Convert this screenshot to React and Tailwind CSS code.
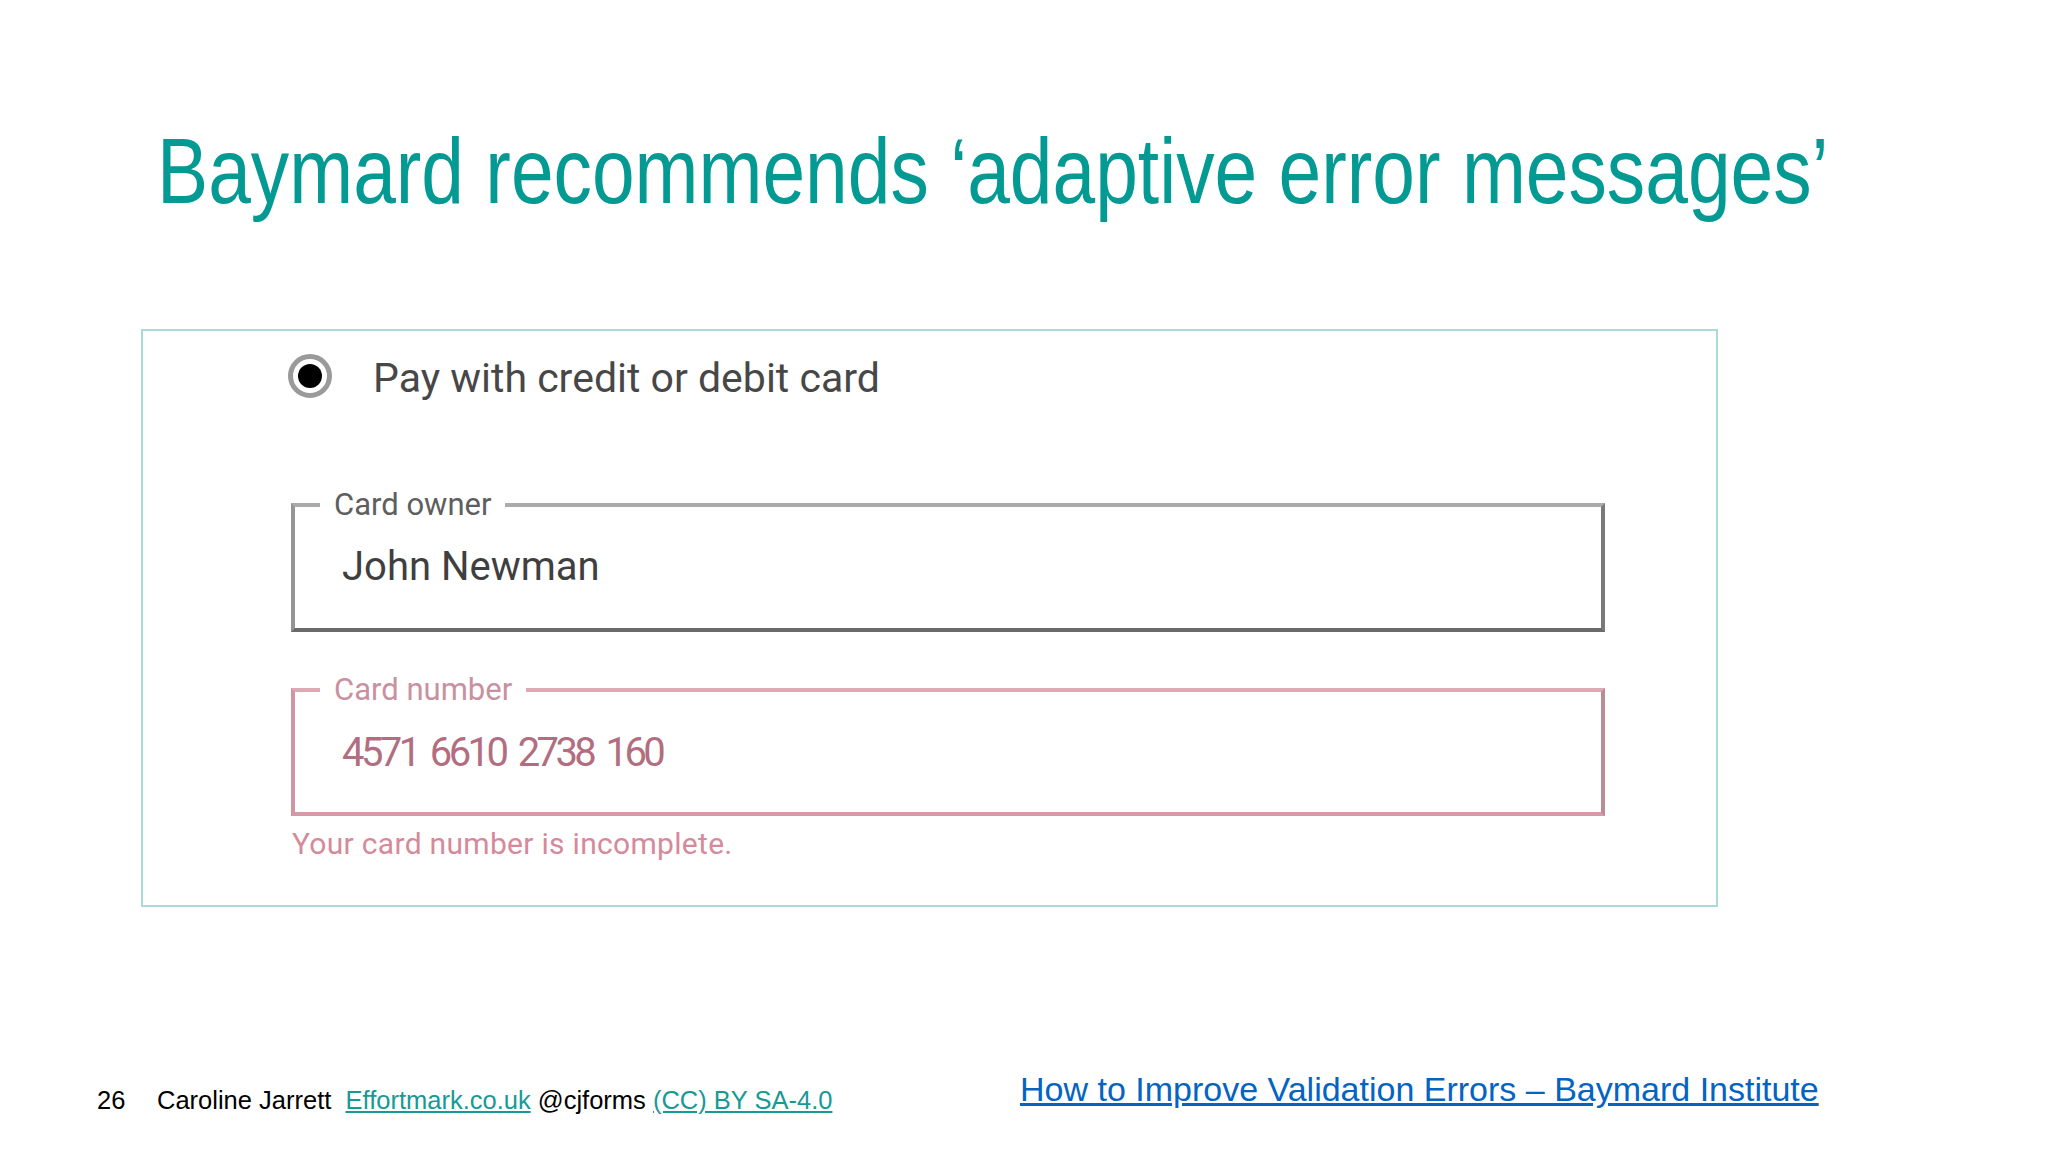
import React from 'react';

const Field = ({ label, value, error = false }) => {
  const frame = error
    ? 'border-t-[#dcaab5] border-l-[#cf96a4] border-r-[#b98c96] border-b-[#d49aa8]'
    : 'border-t-[#ababab] border-l-[#959595] border-r-[#7a7a7a] border-b-[#6a6a6a]';

  return (
    <fieldset className={`w-[1314px] border-[4px] px-[25px] ${frame}`}>
      <legend
        className={`px-[14px] text-[31px] leading-[36px] ${error ? 'text-[#c9919f]' : 'text-[#5e5e5e]'}`}
      >
        {label}
      </legend>
      <div
        className={`pl-[22px] text-[40px] leading-[46px] ${
          error
            ? 'h-[104px] pt-[22px] tracking-[-3.6px] [word-spacing:6px] text-[#b26e80]'
            : 'h-[105px] pt-[21px] text-[#3f3f3f]'
        }`}
      >
        {value}
      </div>
    </fieldset>
  );
};

export default function App() {
  return (
    <div className="w-[2048px] h-[1152px] bg-white flex flex-col overflow-hidden font-['Liberation_Sans',Arial,sans-serif]">
      <div className="ml-[157px] mt-[125px] h-[92px]">
        {/* slide title is set in a narrow face; Liberation Sans squeezed to Arial Narrow width */}
        <h1 className="inline-block origin-left scale-x-[0.834] text-[92px] leading-none text-[#049a94] font-['Liberation_Sans',Arial,sans-serif] whitespace-nowrap">
          Baymard recommends ‘adaptive error messages’
        </h1>
      </div>

      {/* screenshot of the Baymard form example */}
      <div className="ml-[141px] mt-[112px] w-[1577px] h-[578px] border-2 border-[#a9dcd9] flex flex-col font-['Roboto','Liberation_Sans',sans-serif]">
        <div className="flex items-center pt-[21px] pl-[145px]">
          <div className="w-[44px] h-[44px] rounded-full border-[5px] border-[#9a9a9a] flex items-center justify-center">
            <div className="w-[24px] h-[24px] rounded-full bg-black" />
          </div>
          <span className="ml-[41px] mt-[6px] text-[41px] leading-none text-[#474747]">
            Pay with credit or debit card
          </span>
        </div>

        <div className="ml-[148px] mt-[88px]">
          <Field label="Card owner" value="John Newman" />
        </div>

        <div className="ml-[148px] mt-[40px]">
          <Field label="Card number" value="4571 6610 2738 160" error />
        </div>

        <p className="ml-[149px] mt-[12px] text-[30px] leading-[32px] tracking-[0.3px] text-[#d58a9b]">
          Your card number is incomplete.
        </p>
      </div>

      <div className="mt-auto pb-[37px] pl-[97px] flex items-end">
        <div className="w-[923px] text-[25.5px] leading-[30px] text-black whitespace-pre">
          <span className="inline-block w-[60px]">26</span>
          <span>Caroline Jarrett  </span>
          <span className="text-[#169a96] underline">Effortmark.co.uk</span>
          <span> @cjforms </span>
          <span className="text-[#169a96] underline">(CC) BY SA-4.0</span>
        </div>
        <a href="#" className="mb-[6px] text-[34px] leading-[40px] text-[#0563c1] underline whitespace-nowrap">
          How to Improve Validation Errors – Baymard Institute
        </a>
      </div>
    </div>
  );
}
